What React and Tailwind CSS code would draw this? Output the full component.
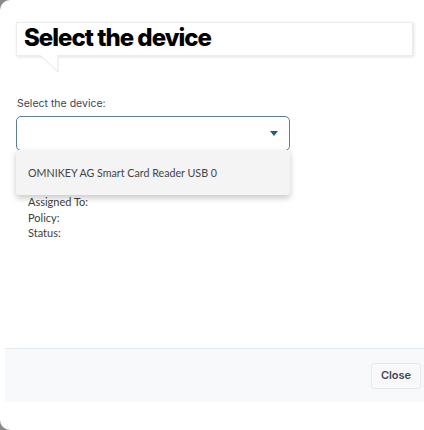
import React from "react";

export default function App() {
  return (
    <div className="w-[424px] h-[430px] bg-[#8a8a8a] overflow-hidden" style={{ fontFamily: "Inter, 'Noto Sans', sans-serif" }}>
      <div className="relative w-[440px] h-[430px] bg-white rounded-[10px] flex flex-col">
        {/* Callout title */}
        <div className="relative mt-[22px] ml-[16px] w-[397px] h-[34px] bg-white border border-[#ececec] shadow-[1px_1px_3px_rgba(0,0,0,0.12)]">
          <div className="pl-[7px] text-[24px] leading-[29px] font-extrabold text-black tracking-[-1px]">Select the device</div>
          <svg className="absolute left-[23px] top-[32px]" width="19" height="18" viewBox="0 0 19 18">
            <path d="M0 0 L18 17 L18 0 Z" fill="white" />
            <path d="M0.5 0.5 L18 17 L18 0.5" fill="none" stroke="#e4e4e4" strokeWidth="1" />
          </svg>
        </div>

        {/* Form */}
        <div className="relative ml-[16px] mt-[41px]">
          <div className="pl-[1px] text-[10.5px] leading-[14px] text-[#3b4454]">Select the device:</div>
          <div className="mt-[5px] w-[274px] h-[35px] border border-[#5d7d93] rounded-[5px] flex items-center justify-end pr-[11px]">
            <svg width="8" height="5" viewBox="0 0 8 5">
              <path d="M0 0 L8 0 L4 5 Z" fill="#2f5975" />
            </svg>
          </div>

          <div className="ml-[12px] mt-[43px] text-[11px] leading-[15.5px] text-[#3d3d3d]" style={{ fontFamily: "Lato, 'Noto Sans', sans-serif" }}>
            <div className="h-[15.5px]">Assigned To:</div>
            <div className="h-[15.5px]">Policy:</div>
            <div className="h-[15.5px]">Status:</div>
          </div>

          {/* Dropdown overlay */}
          <div className="absolute left-0 top-[53px] w-[274px] h-[45px] bg-[#f4f4f4] rounded-b-[3px] shadow-[0_3px_6px_rgba(0,0,0,0.22)] flex items-center pl-[12px] pt-[1px]">
            <span className="text-[10.7px] text-[#444]" style={{ fontFamily: "Lato, 'Noto Sans', sans-serif" }}>OMNIKEY AG Smart Card Reader USB 0</span>
          </div>
        </div>

        {/* Footer */}
        <div className="absolute left-[5px] top-[348px] right-0 h-[54px] bg-[#f8f9fb] border-t border-[#e6ebf0] flex items-center">
          <div className="ml-[366px] w-[50px] h-[26px] border border-[#e6e9ee] rounded-[3px] bg-[#f8f9fb] flex items-center justify-center text-[11px] font-semibold text-[#3f4756]">Close</div>
        </div>
      </div>
    </div>
  );
}
